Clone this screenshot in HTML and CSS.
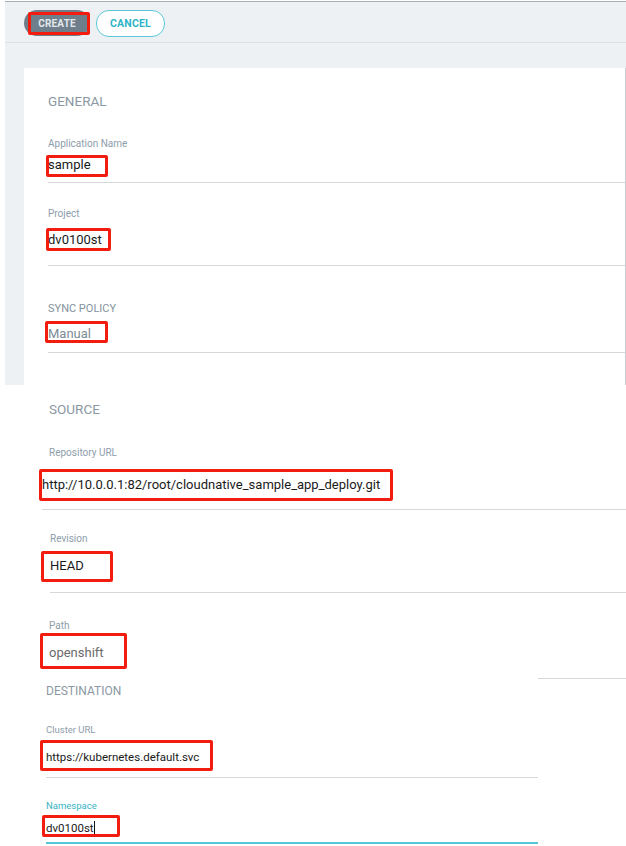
FILE: index.html
```html
<!DOCTYPE html>
<html lang="en">
<head>
<meta charset="utf-8">
<title>Create application</title>
<link rel="stylesheet" href="styles.css">
</head>
<body>
<div class="page">
  <section class="shot shot-top">
    <div class="toolbar">
      <button class="btn btn-create" type="button">CREATE</button>
      <button class="btn btn-cancel" type="button">CANCEL</button>
    </div>
    <div class="canvas">
      <div class="card">
        <h3 class="sec sec-general">GENERAL</h3>
        <div class="field f-app">
          <div class="lbl">Application Name</div>
          <div class="val mark m-sample">sample</div>
        </div>
        <div class="field f-proj">
          <div class="lbl">Project</div>
          <div class="val mark m-proj">dv0100st</div>
        </div>
        <div class="field f-sync">
          <div class="lbl lbl-caps">SYNC POLICY</div>
          <div class="val val-muted mark m-manual">Manual</div>
        </div>
      </div>
    </div>
  </section>

  <section class="shot shot-source">
    <h3 class="sec sec-source">SOURCE</h3>
    <div class="field f-repo">
      <div class="lbl">Repository URL</div>
      <div class="val mark m-repo">http://10.0.0.1:82/root/cloudnative_sample_app_deploy.git</div>
    </div>
    <div class="field f-rev">
      <div class="lbl">Revision</div>
      <div class="val mark m-head">HEAD</div>
    </div>
    <div class="field f-path">
      <div class="lbl">Path</div>
      <div class="val val-grey mark m-path">openshift</div>
    </div>
  </section>

  <section class="shot shot-dest">
    <div class="dest">
      <h3 class="sec sec-dest">DESTINATION</h3>
      <div class="field f-cluster">
        <div class="lbl">Cluster URL</div>
        <div class="val mark m-cluster">https://kubernetes.default.svc</div>
      </div>
      <div class="field f-ns">
        <div class="lbl lbl-focus">Namespace</div>
        <div class="val mark m-ns">dv0100st<span class="caret"></span></div>
      </div>
    </div>
    <div class="dest-side"></div>
  </section>
</div>
</body>
</html>
```

FILE: styles.css
```css
html, body {
  margin: 0;
  padding: 0;
  background: #ffffff;
}

body {
  font-family: Roboto, "Noto Sans", "Liberation Sans", sans-serif;
  width: 626px;
  height: 846px;
  overflow: hidden;
  color: #1f1f1f;
}

.page {
  width: 626px;
}

h3 {
  margin: 0;
  font-weight: 400;
}

/* ---------- top screenshot ---------- */
.shot-top {
  margin: 1px 0 0 5px;
  height: 384px;
  box-sizing: border-box;
  border-top: 1px solid #a9aeb2;
  background: #eef1f4;
  display: flex;
  flex-direction: column;
}

.toolbar {
  border-bottom: 1px solid #dce1e5;
  display: flex;
  align-items: flex-start;
  gap: 6px;
  padding: 8px 0 0 19px;
  box-sizing: content-box;
  height: 32px;
}

.btn {
  font-family: Roboto, "Noto Sans", sans-serif;
  font-weight: 700;
  height: 26px;
  border-radius: 13px;
  padding: 0;
  cursor: pointer;
  letter-spacing: 0.2px;
}

.btn-create {
  position: relative;
  width: 66px;
  border: none;
  background: #6e7e8a;
  color: #e3e8ec;
  font-size: 10px;
}

.btn-create::after {
  content: "";
  position: absolute;
  left: 4px;
  top: 2px;
  width: 62px;
  height: 23px;
  box-sizing: border-box;
  border: 3px solid #f21d0e;
  border-radius: 2px;
}

.btn-cancel {
  width: 69px;
  height: 27px;
  border: 1.5px solid #5cc8d7;
  background: #ffffff;
  color: #2fb4c7;
  font-size: 10.5px;
}

.canvas {
  flex: 1;
  display: flex;
  padding: 25px 0 0 19px;
}

.card {
  flex: 1;
  background: #ffffff;
  border-right: 1px solid #c9cdd0;
  padding-left: 24px;
}

/* ---------- shared field styles ---------- */
.sec {
  color: #8b98a3;
  font-size: 13.5px;
  line-height: 14px;
}

.sec-general {
  padding-top: 26px;
}

.field {
  border-bottom: 1px solid #d6d9dc;
}

.lbl {
  font-size: 10px;
  line-height: 12px;
  color: #8e9daa;
}

.lbl-caps {
  font-size: 11px;
  color: #84929d;
}

.val {
  font-size: 13px;
  line-height: 16px;
  height: 16px;
  color: #1a1a1a;
  white-space: nowrap;
}

.val-muted {
  color: #7d8b96;
}

.val-grey {
  color: #6a6a6a;
}

.mark {
  position: relative;
}

.mark::after {
  content: "";
  position: absolute;
  box-sizing: border-box;
  border: 3px solid #f21d0e;
  border-radius: 2px;
}

/* general fields */
.f-app { padding: 30px 0 9px; }
.f-app .val { margin-top: 7px; }
.m-sample::after { left: -2px; top: -2px; width: 62px; height: 22px; }

.f-proj { padding: 25px 0 17px; }
.f-proj .val { margin-top: 12px; }
.m-proj::after { left: -2px; top: -4px; width: 65px; height: 23px; }

.f-sync { padding: 37px 0 10px; }
.f-sync .val { margin-top: 11px; }
.m-manual::after { left: -3px; top: -5px; width: 63px; height: 22px; }

/* ---------- source screenshot ---------- */
.shot-source {
  background: #ffffff;
}

.sec-source {
  padding: 16px 0 0 49px;
  line-height: 16px;
}

.f-repo {
  margin-left: 42px;
  padding: 30px 0 16px;
}
.f-repo .lbl { padding-left: 7px; }
.f-repo .val { margin-top: 18px; }
.m-repo::after { left: -3px; top: -8px; width: 354px; height: 32px; }

.f-rev {
  margin-left: 50px;
  padding: 23px 0 18px;
}
.f-rev .val { margin-top: 13px; }
.m-head::after { left: -9px; top: -7px; width: 72px; height: 31px; }

.f-path {
  margin-left: 49px;
  padding: 27px 0 9px;
  border-bottom: none;
}
.f-path .val { margin-top: 13px; }
.m-path::after { left: -9px; top: -12px; width: 87px; height: 36px; }

/* ---------- destination screenshot ---------- */
.shot-dest {
  display: flex;
  align-items: flex-start;
  background: #ffffff;
}

.dest {
  width: 538px;
  box-sizing: border-box;
  padding-left: 46px;
}

.dest-side {
  flex: 1;
  margin-top: 8px;
  border-top: 1px solid #d6d9dc;
}

.sec-dest {
  padding-top: 14px;
  font-size: 12px;
}

.dest .lbl {
  font-size: 9.5px;
  line-height: 11px;
}

.dest .val {
  font-size: 11.5px;
  line-height: 14px;
  height: 14px;
}

.f-cluster { padding: 26px 0 13px; }
.f-cluster .val { margin-top: 15px; }
.m-cluster::after { left: -6px; top: -10px; width: 173px; height: 31px; }

.f-ns {
  padding: 22px 0 7px;
  border-bottom: 2px solid #54c6d8;
}
.lbl-focus { color: #35b3c6 !important; }
.f-ns .val { margin-top: 10px; }
.m-ns::after { left: -4px; top: -6px; width: 78px; height: 22px; }

.caret {
  display: inline-block;
  width: 0;
  height: 14px;
  border-left: 1px solid #111;
  vertical-align: top;
}
```
